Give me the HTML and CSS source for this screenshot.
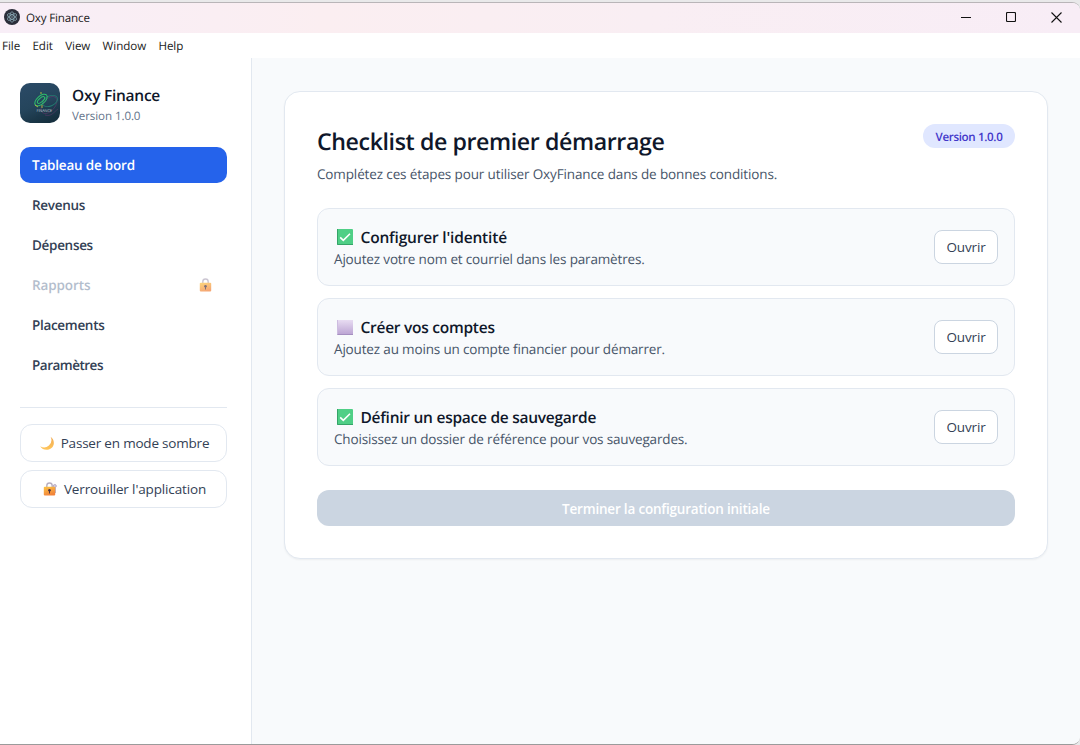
FILE: index.html
```html
<!DOCTYPE html>
<html lang="fr">
<head>
    <meta charset="UTF-8">
    <meta name="viewport" content="width=device-width, initial-scale=1.0">
    <title>Oxy Finance</title>
    <link rel="stylesheet" href="styles.css">
</head>
<body>
    <svg width="0" height="0" class="defs">
        <defs>
            <linearGradient id="or" x1="0" y1="0" x2="0.4" y2="1">
                <stop offset="0" stop-color="#fcc545"/>
                <stop offset="1" stop-color="#f2833a"/>
            </linearGradient>
            <linearGradient id="lune" x1="0" y1="0" x2="0" y2="1">
                <stop offset="0" stop-color="#f0ab55"/>
                <stop offset="1" stop-color="#ffc55a"/>
            </linearGradient>
            <linearGradient id="fond" x1="0.2" y1="0" x2="0.6" y2="1">
                <stop offset="0" stop-color="#2a4a66"/>
                <stop offset="0.55" stop-color="#25455c"/>
                <stop offset="1" stop-color="#16303f"/>
            </linearGradient>
            <symbol id="cadenas" viewBox="0 0 14 14">
                <path d="M3.8 6V3.7a2.7 2.7 0 0 1 5.4 0V6" fill="none" stroke="#b6aec0" stroke-width="1.4"/>
                <rect x="0.8" y="4.8" width="11.4" height="8.8" rx="1" fill="url(#or)"/>
                <circle cx="6.5" cy="8.2" r="1.3" fill="#4b3340"/>
                <path d="M6.5 8.5v3" stroke="#4b3340"/>
            </symbol>
            <symbol id="coche" viewBox="0 0 16 16">
                <rect width="16" height="16" rx="1" fill="#4fcf86"/>
                <path d="M0.5 0v15.5H16" fill="none" stroke="#35a468"/>
                <path d="M3.2 8.4l3.1 3L13 4.7" fill="none" stroke="#fff" stroke-width="1.6"/>
            </symbol>
        </defs>
    </svg>

    <div class="desktop">
    <div class="window">
        <!-- Barre de titre -->
        <header class="titlebar">
            <svg class="app-icon" width="16" height="16" viewBox="0 0 16 16">
                <circle cx="8" cy="8" r="8" fill="#2b2e3a"/>
                <g fill="none" stroke="#9fc4d0" stroke-width="0.6">
                    <ellipse cx="8" cy="8" rx="5.2" ry="2.1" transform="rotate(30 8 8)"/>
                    <ellipse cx="8" cy="8" rx="5.2" ry="2.1" transform="rotate(90 8 8)"/>
                    <ellipse cx="8" cy="8" rx="5.2" ry="2.1" transform="rotate(150 8 8)"/>
                </g>
                <circle cx="8" cy="8" r="0.7" fill="#9fc4d0"/>
            </svg>
            <span class="app-title">Oxy Finance</span>
            <div class="controls">
                <svg width="10" height="10" viewBox="0 0 10 10"><path d="M0 5.5h10" stroke="#111"/></svg>
                <svg width="10" height="10" viewBox="0 0 10 10"><rect x="0.5" y="0.5" width="9" height="9" rx="1" fill="none" stroke="#111" stroke-width="1.1"/></svg>
                <svg width="11" height="11" viewBox="0 0 11 11"><path d="M0.5 0.5l10 10M10.5 0.5l-10 10" stroke="#111" stroke-width="1.1"/></svg>
            </div>
        </header>

        <nav class="menubar">
            <span>File</span>
            <span>Edit</span>
            <span>View</span>
            <span>Window</span>
            <span>Help</span>
        </nav>

        <div class="layout">
            <!-- Barre latérale -->
            <aside class="sidebar">
                <div class="brand">
                    <svg class="logo" width="40" height="40" viewBox="0 0 40 40">
                        <rect width="40" height="40" fill="url(#fond)"/>
                        <g fill="none" stroke="#7a3a78" stroke-width="0.7" opacity="0.6">
                            <ellipse cx="29" cy="22" rx="10" ry="6" transform="rotate(-50 29 22)"/>
                            <path d="M25 32c6 2 9-3 13-6"/>
                        </g>
                        <ellipse cx="30" cy="18" rx="8" ry="5" fill="none" stroke="#24786f" stroke-width="0.9" transform="rotate(-25 30 18)"/>
                        <g fill="none" stroke="#2fc06b" stroke-width="1">
                            <ellipse cx="21" cy="17" rx="7.5" ry="4" transform="rotate(-42 21 17)"/>
                            <ellipse cx="21" cy="17" rx="4.5" ry="2" transform="rotate(-42 21 17)"/>
                        </g>
                        <path d="M21 9v2M15 22l3 2M22 22v3" stroke="#a5b843" stroke-width="1"/>
                        <text x="16.5" y="28.5" class="logo-text">FINANCE</text>
                    </svg>
                    <div class="brand-text">
                        <div class="brand-name">Oxy Finance</div>
                        <div class="brand-version">Version 1.0.0</div>
                    </div>
                </div>

                <ul class="menu">
                    <li class="active">Tableau de bord</li>
                    <li class="serre">Revenus</li>
                    <li class="serre">Dépenses</li>
                    <li class="locked">Rapports<svg width="14" height="14"><use href="#cadenas"/></svg></li>
                    <li class="serre">Placements</li>
                    <li class="tres-serre">Paramètres</li>
                </ul>

                <div class="actions">
                    <button type="button" class="side-btn">
                        <svg width="14" height="14" viewBox="0 0 14 14"><path d="M10.6 0.8a7.3 7.3 0 0 1-10.4 9.4c2.5 4.4 8.5 4.6 11.9 1.2 3.2-3.5 1.6-8.6-1.5-10.6z" fill="url(#lune)"/></svg>
                        <span>Passer en mode sombre</span>
                    </button>
                    <button type="button" class="side-btn lock-btn">
                        <svg width="14" height="14" viewBox="0 0 14 14">
                            <path d="M12.3 5v6" stroke="#b9aec6" stroke-width="1.3"/>
                            <circle cx="11.8" cy="4" r="1.5" fill="#d3cbdc" stroke="#b9aec6"/>
                            <use href="#cadenas" width="14" height="14"/>
                        </svg>
                        <span>Verrouiller l'application</span>
                    </button>
                </div>
            </aside>

            <!-- Contenu principal -->
            <main class="content">
                <section class="card">
                    <div class="card-header">
                        <div>
                            <h1>Checklist de premier démarrage</h1>
                            <p class="intro">Complétez ces étapes pour utiliser OxyFinance dans de bonnes conditions.</p>
                        </div>
                        <span class="badge">Version 1.0.0</span>
                    </div>

                    <div class="steps">
                        <div class="step">
                            <div>
                                <h2 class="large"><svg width="16" height="16"><use href="#coche"/></svg>Configurer l'identité</h2>
                                <p>Ajoutez votre nom et courriel dans les paramètres.</p>
                            </div>
                            <button type="button" class="open-btn">Ouvrir</button>
                        </div>
                        <div class="step">
                            <div>
                                <h2><i class="todo"></i>Créer vos comptes</h2>
                                <p>Ajoutez au moins un compte financier pour démarrer.</p>
                            </div>
                            <button type="button" class="open-btn">Ouvrir</button>
                        </div>
                        <div class="step">
                            <div>
                                <h2><svg width="16" height="16"><use href="#coche"/></svg>Définir un espace de sauvegarde</h2>
                                <p>Choisissez un dossier de référence pour vos sauvegardes.</p>
                            </div>
                            <button type="button" class="open-btn">Ouvrir</button>
                        </div>
                    </div>

                    <button type="button" class="finish-btn" disabled>Terminer la configuration initiale</button>
                </section>
            </main>
        </div>
    </div>
    </div>
</body>
</html>
```
FILE: styles.css
```css
* {
    box-sizing: border-box;
}

body {
    font-family: "Open Sans", "Noto Sans", sans-serif;
    font-size: 13.5px;
    letter-spacing: -0.16px;
    color: #0f172a;
    margin: 0;
    white-space: nowrap;
    text-rendering: geometricPrecision;
}

h1, h2, p, ul {
    margin: 0;
    padding: 0;
}

button {
    font-family: inherit;
    font-size: 13.5px;
    letter-spacing: inherit;
}

.defs {
    position: absolute;
}

/* Fenêtre */
.desktop {
    height: 745px;
    padding-top: 2px;
    background-color: #e9e9ea;
    overflow: hidden;
}

.window {
    height: 743px;
    display: flex;
    flex-direction: column;
    background-color: #fff;
    border-top: 1px solid #b9b5b8;
    border-bottom: 1px solid #9b9b9b;
    border-radius: 0 8px 8px 0;
    overflow: hidden;
}

.titlebar {
    height: 30px;
    flex-shrink: 0;
    display: flex;
    align-items: center;
    padding: 0 18px 2px 4px;
    background: linear-gradient(90deg, #f8eef7 0%, #fbeef1 30%, #f9eef3 60%, #f8edf6 100%);
}

.app-title {
    font-size: 11.6px;
    color: #1a1a1a;
    margin-left: 6px;
    padding-top: 2px;
}

.controls {
    margin-left: auto;
    display: flex;
    align-items: center;
    gap: 35px;
}

.menubar {
    height: 25px;
    flex-shrink: 0;
    display: flex;
    align-items: center;
    gap: 12.3px;
    padding: 1px 0 0 2px;
    font-size: 11.6px;
    letter-spacing: -0.05px;
    color: #1a1a1a;
}

.layout {
    flex: 1;
    display: flex;
}

/* Barre latérale */
.sidebar {
    width: 252px;
    flex-shrink: 0;
    padding: 25px 24px 0 20px;
    border-right: 1px solid #e2e8f0;
}

.brand {
    height: 40px;
    display: flex;
    align-items: flex-start;
    gap: 12px;
    margin-bottom: 24px;
}

.brand-text {
    padding-top: 1px;
}

.logo {
    border-radius: 10px;
}

.logo-text {
    font-size: 4px;
    fill: #b8c4cc;
}

.brand-name {
    font-size: 15.5px;
    font-weight: 600;
    line-height: 23px;
    letter-spacing: -0.27px;
}

.brand-version {
    font-size: 11.6px;
    line-height: 19px;
    letter-spacing: -0.1px;
    color: #64748b;
}

.menu {
    list-style: none;
    display: flex;
    flex-direction: column;
    gap: 4px;
}

.menu li {
    height: 36px;
    display: flex;
    align-items: center;
    justify-content: space-between;
    padding: 0 14px 1px 12px;
    border-radius: 10px;
    font-weight: 600;
    letter-spacing: -0.2px;
    color: #334155;
}

.menu .serre {
    letter-spacing: -0.31px;
}

.menu .tres-serre {
    letter-spacing: -0.5px;
}

.menu .active {
    background-color: #2563eb;
    color: #fff;
}

.menu .locked {
    padding-bottom: 0;
    opacity: 0.7;
    letter-spacing: -0.1px;
    color: #94a3b8;
}

.actions {
    display: flex;
    flex-direction: column;
    gap: 8px;
    margin-top: 24px;
    padding-top: 16px;
    border-top: 1px solid #e2e8f0;
}

.side-btn {
    height: 38px;
    display: flex;
    align-items: center;
    justify-content: center;
    gap: 7px;
    padding: 0 0 0 2px;
    background-color: #fff;
    border: 1px solid #e2e8f0;
    border-radius: 12px;
    letter-spacing: -0.2px;
    color: #334155;
}

.lock-btn {
    letter-spacing: -0.14px;
}

/* Contenu principal */
.content {
    flex: 1;
    padding: 33px 32px;
    background-color: #f8fafc;
}

.card {
    height: 468px;
    padding: 32px;
    background-color: #fff;
    border: 1px solid #e2e8f0;
    border-radius: 16px;
    box-shadow: 0 1px 2px rgba(0, 0, 0, 0.05);
}

.card-header {
    height: 84px;
    display: flex;
    justify-content: space-between;
    align-items: flex-start;
}

h1 {
    font-size: 23.2px;
    font-weight: 600;
    line-height: 35px;
    letter-spacing: -0.41px;
}

.intro {
    line-height: 20px;
    letter-spacing: -0.13px;
    margin-top: 5px;
    color: #475569;
}

.badge {
    width: 92px;
    height: 24px;
    line-height: 27px;
    text-align: center;
    background-color: #e0e7ff;
    border-radius: 12px;
    font-size: 11.6px;
    font-weight: 600;
    letter-spacing: -0.35px;
    color: #4338ca;
}

.steps {
    display: flex;
    flex-direction: column;
    gap: 12px;
}

.step {
    height: 78px;
    display: flex;
    align-items: center;
    justify-content: space-between;
    padding: 0 16px;
    background-color: #f8fafc;
    border: 1px solid #e2e8f0;
    border-radius: 12px;
}

h2 {
    display: flex;
    align-items: center;
    gap: 7.5px;
    padding-left: 3px;
    font-size: 15.5px;
    font-weight: 600;
    line-height: 24px;
    letter-spacing: -0.26px;
}

h2.large {
    letter-spacing: -0.18px;
}

.todo {
    width: 16px;
    height: 15px;
    background: linear-gradient(#e8dcf2, #bda6d4);
    border-left: 1px solid #cdbce0;
    border-bottom: 1px solid #a58fc0;
}

.step p {
    line-height: 20px;
    color: #475569;
}

.open-btn {
    width: 64px;
    height: 34px;
    padding: 0;
    background-color: #fff;
    border: 1px solid #cbd5e1;
    border-radius: 8px;
    color: #334155;
}

.finish-btn {
    width: 100%;
    height: 36px;
    margin-top: 24px;
    padding: 1px 0 0;
    background-color: #cbd5e1;
    border: none;
    border-radius: 12px;
    font-weight: 600;
    letter-spacing: -0.2px;
    color: #fff;
}
```
